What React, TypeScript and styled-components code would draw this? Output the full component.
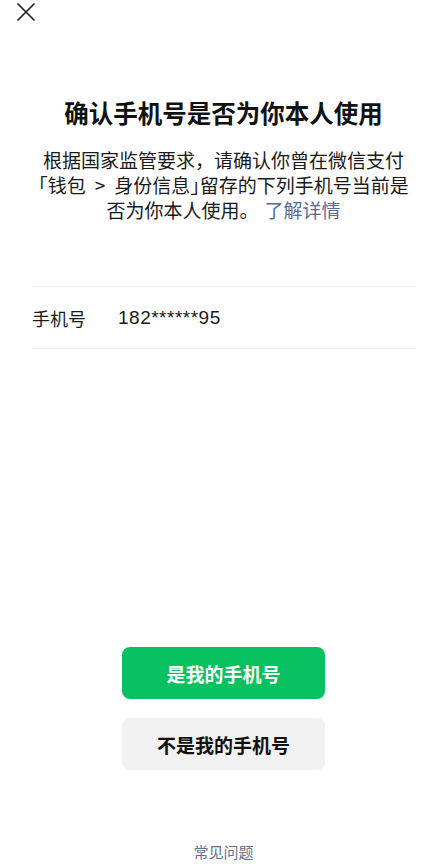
import React from 'react'
import styled, { createGlobalStyle } from 'styled-components'

const GlobalStyle = createGlobalStyle`
    html, body {
        margin: 0;
        padding: 0;
        background: #fff;
    }
    body {
        font-family: "Noto Sans CJK SC", "Noto Sans", sans-serif;
        color: #1a1a1a;
    }
`

const Page = styled.div`
    min-height: 868px;
    display: flex;
    flex-direction: column;
    box-sizing: border-box;
    padding-bottom: 6px;
`

const TopBar = styled.div`
    height: 24px;
    display: flex;
    align-items: flex-start;
    padding: 3px 0 0 16px;
    box-sizing: border-box;
`

const CloseButton = styled.button`
    width: 20px;
    height: 18px;
    padding: 0;
    border: 0;
    background: none;
    display: flex;
    align-items: center;
    justify-content: center;
`

const Title = styled.h1`
    margin: 73px 0 0;
    font-size: 24.5px;
    line-height: 32px;
    font-weight: 700;
    color: #111;
    text-align: center;
`

const Intro = styled.p`
    margin: 18px 0 0;
    font-size: 19px;
    line-height: 25px;
    text-align: center;
    white-space: nowrap;
    color: #1a1a1a;
`

const Bracket = styled.span`
    font-feature-settings: "halt";
`

const Arrow = styled.span`
    padding: 0 9px;
`

const Link = styled.a`
    color: #576b95;
    text-decoration: none;
    margin-left: 6px;
`

const InfoTable = styled.div`
    margin: 64px 31px 0 32px;
    border-top: 1px solid #ededed;
    border-bottom: 1px solid #ededed;
`

const InfoRow = styled.div`
    height: 61px;
    display: flex;
    align-items: center;
    font-size: 18px;
`

const InfoLabel = styled.span`
    width: 86px;
    color: #1a1a1a;
`

const InfoValue = styled.span`
    font-family: "Liberation Sans", "Noto Sans", sans-serif;
    font-size: 19px;
    letter-spacing: 0.5px;
    color: #1a1a1a;
`

const Actions = styled.div`
    margin-top: auto;
    display: flex;
    flex-direction: column;
    align-items: center;
    gap: 19px;
`

const ActionButton = styled.button<{ $primary?: boolean }>`
    width: 203px;
    height: 52px;
    border: 0;
    border-radius: 8px;
    font-family: inherit;
    font-size: 19px;
    font-weight: 700;
    background: ${(p) => (p.$primary ? '#07c160' : '#f2f2f2')};
    color: ${(p) => (p.$primary ? '#fff' : '#111')};
`

const Footer = styled.a`
    margin-top: 72px;
    align-self: center;
    font-size: 15px;
    line-height: 20px;
    color: #5f6f8f;
    text-decoration: none;
`

export default function App() {
    return (
        <>
            <GlobalStyle />
            <Page>
                <TopBar>
                    <CloseButton aria-label="关闭">
                        <svg width="18" height="18" viewBox="0 0 18 18">
                            <path d="M1 1 L17 17 M17 1 L1 17" stroke="#222" strokeWidth="1.7" strokeLinecap="round" />
                        </svg>
                    </CloseButton>
                </TopBar>

                <Title>确认手机号是否为你本人使用</Title>
                <Intro>
                    根据国家监管要求，请确认你曾在微信支付
                    <br />
                    <Bracket>「</Bracket>钱包<Arrow>&gt;</Arrow>身份信息<Bracket>」</Bracket>留存的下列手机号当前是
                    <br />
                    否为你本人使用。<Link href="#">了解详情</Link>
                </Intro>

                <InfoTable>
                    <InfoRow>
                        <InfoLabel>手机号</InfoLabel>
                        <InfoValue>182******95</InfoValue>
                    </InfoRow>
                </InfoTable>

                <Actions>
                    <ActionButton $primary>是我的手机号</ActionButton>
                    <ActionButton>不是我的手机号</ActionButton>
                </Actions>

                <Footer href="#">常见问题</Footer>
            </Page>
        </>
    )
}
